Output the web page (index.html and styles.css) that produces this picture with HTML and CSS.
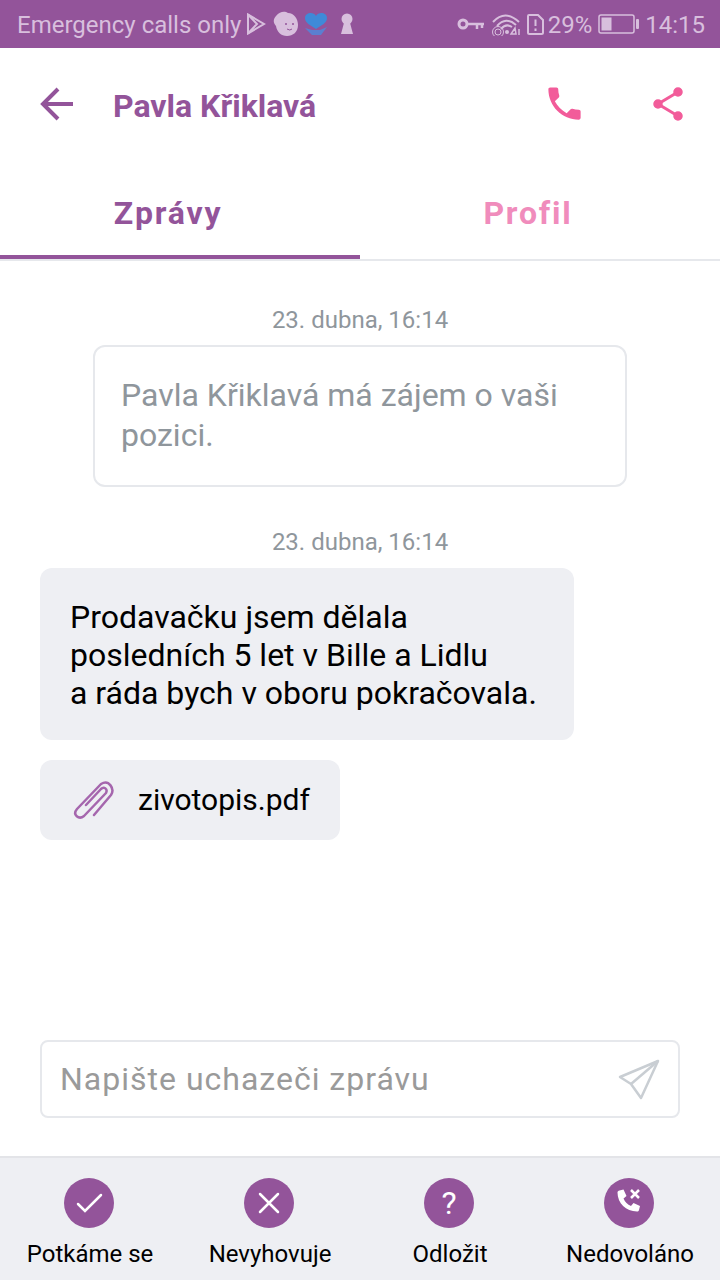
FILE: index.html
```html
<!DOCTYPE html>
<html lang="cs">
<head>
  <meta charset="UTF-8" />
  <meta name="viewport" content="width=device-width, initial-scale=1" />
  <title>Pavla Křiklavá</title>
  <link rel="stylesheet" href="styles.css">
</head>
<body>
  <div class="app">

    <div class="status-bar">
      <div class="status-left">
        <span class="carrier">Emergency calls only</span>
        <svg class="ic-play" width="20" height="22" viewBox="0 0 20 22" fill="none" stroke="#d8bfdd" stroke-width="2"><path d="M2 1.500V20.500L18 11Z"/><path d="M2 1.500L11 11L2 20.500"/></svg>
        <svg class="ic-baby" width="26" height="26" viewBox="0 0 26 26"><path d="M3 5C7 0 12 0 15 2C21 2 25 8 25 14C25 21 20 25 14 25C8 25 4 21 3 15C0 12 0 8 3 5Z" fill="#d8bfdd"/><circle cx="13" cy="13" r="1" fill="#93549a"/><circle cx="20" cy="13" r="1" fill="#93549a"/><path d="M14 18q3 2 5 0" fill="none" stroke="#93549a" stroke-width="1"/></svg>
        <svg class="ic-heart" width="24" height="24" viewBox="0 0 24 24"><path d="M12 17C6 13 1 11 1 6C1 1 9 -1 12 4C15 -1 23 1 23 6C23 11 18 13 12 17Z" fill="#3f8ad8"/><path d="M1 16L8 18H16L23 15L17 23H8Z" fill="#5b7fd0"/></svg>
        <svg class="ic-keyhole" width="14" height="22" viewBox="0 0 14 22"><circle cx="7" cy="6" r="5.500" fill="#d8bfdd"/><path d="M4.500 8H9.500L13 21H1Z" fill="#d8bfdd"/></svg>
      </div>
      <div class="status-right">
        <svg class="ic-key" width="28" height="14" viewBox="0 0 28 14" fill="none" stroke="#d8bfdd"><circle cx="6" cy="7" r="4" stroke-width="3"/><path d="M10 7H27M20 7V12M25 7V11" stroke-width="2.500"/></svg>
        <svg class="ic-wifi" width="29" height="24" viewBox="0 0 29 24" fill="none" stroke="#d8bfdd" stroke-width="2"><path d="M1 10Q13 -3 27 10"/><path d="M5 14Q14 4 24 13"/><path d="M9 17Q14 11 20 15"/><circle cx="6" cy="20" r="3" stroke-width="1"/><circle cx="6" cy="20" r="5.500" stroke-width="1"/><circle cx="15" cy="20" r="2" fill="#d8bfdd" stroke="none"/><path d="M19 22h5l-1-6zM27 17v6" stroke-width="1.500"/></svg>
        <svg class="ic-sim" width="17" height="21" viewBox="0 0 17 21" fill="none" stroke="#d8bfdd" stroke-width="2"><path d="M2 1H11L16 6V18.500Q16 20 14.500 20H2.500Q1 20 1 18.500V2Q1 1 2 1Z"/><path d="M8.500 5.500V12M8.500 14.500V17"/></svg>
        <span class="battery-pct">29%</span>
        <svg class="ic-battery" width="41" height="20" viewBox="0 0 41 20" fill="none"><rect x="1" y="1" width="35" height="18" rx="2" stroke="#d8bfdd" stroke-width="1.500"/><rect x="3.500" y="3.500" width="10" height="13" fill="#d8bfdd"/><rect x="38" y="5" width="3" height="10" rx="1" fill="#d8bfdd"/></svg>
        <span class="clock">14:15</span>
      </div>
    </div>

    <header class="top-bar">
      <svg class="back" width="34" height="34" viewBox="0 0 34 34" fill="none" stroke="#93549a" stroke-width="4"><path d="M33 17H3"/><path d="M18 2L3 17L18 32"/></svg>
      <h1 class="contact-name">Pavla Křiklavá</h1>
      <div class="top-actions">
        <svg class="ic-call" width="43" height="43" viewBox="0 0 24 24" fill="#f25c9a"><path d="M6.620 10.790c1.440 2.830 3.760 5.140 6.590 6.590l2.200-2.200c.27-.27.67-.36 1.020-.24 1.120.37 2.330.57 3.570.57.55 0 1 .45 1 1V20c0 .55-.45 1-1 1-9.390 0-17-7.610-17-17 0-.55.45-1 1-1h3.500c.55 0 1 .45 1 1 0 1.250.2 2.450.57 3.570.11.35.03.74-.25 1.020l-2.200 2.200z"/></svg>
        <svg class="ic-share" width="34" height="36" viewBox="0 0 34 36" fill="#f25c9a" stroke="#f25c9a"><path d="M27 6L7 18L27 30" fill="none" stroke-width="3"/><circle cx="27" cy="6" r="4" stroke-width="1.500"/><circle cx="7" cy="18" r="4" stroke-width="1.500"/><circle cx="27" cy="30" r="4" stroke-width="1.500"/></svg>
      </div>
    </header>

    <nav class="tabs">
      <a class="tab active" href="#zpravy">Zprávy</a>
      <a class="tab" href="#profil">Profil</a>
    </nav>

    <main class="messages">
      <p class="stamp">23. dubna, 16:14</p>
      <div class="notice">Pavla Křiklavá má zájem o vaši pozici.</div>
      <p class="stamp stamp-second">23. dubna, 16:14</p>
      <div class="bubble">Prodavačku jsem dělala<br>posledních 5 let v Bille a Lidlu<br>a ráda bych v oboru pokračovala.</div>
      <div class="file">
        <svg width="42" height="42" viewBox="0 0 42 42" fill="none" stroke="#a566ad" stroke-width="2.500" stroke-linecap="round" stroke-linejoin="round"><path d="M21 37L38 17C42 11 36 1 28 6L4 31C-1 37 6 42 11 38L33 15C35 11 31 8 28 11L13 27"/></svg>
        <span>zivotopis.pdf</span>
      </div>
    </main>

    <div class="composer">
      <span class="placeholder">Napište uchazeči zprávu</span>
      <svg width="42" height="42" viewBox="0 0 42 42" fill="none" stroke="#c9ced3" stroke-width="2.500" stroke-linejoin="round"><path d="M40 3L2 19L13 26L23 40Z"/><path d="M40 3L13 26"/></svg>
    </div>

    <footer class="actions">
      <div class="action">
        <span class="circle"><svg width="28" height="28" viewBox="0 0 28 28" fill="none" stroke="#fff" stroke-width="2.500" stroke-linecap="round"><path d="M3 15L10 22L26 6"/></svg></span>
        <span class="action-label">Potkáme se</span>
      </div>
      <div class="action">
        <span class="circle"><svg width="26" height="26" viewBox="0 0 26 26" fill="none" stroke="#fff" stroke-width="2.500" stroke-linecap="round"><path d="M4 4L22 22M22 4L4 22"/></svg></span>
        <span class="action-label">Nevyhovuje</span>
      </div>
      <div class="action">
        <span class="circle circle-text">?</span>
        <span class="action-label">Odložit</span>
      </div>
      <div class="action">
        <span class="circle"><svg width="30" height="30" viewBox="0 0 30 30"><path d="M5.500 2.500l4-1 3 6.500-3 2.500c1.500 3.500 4 6 7.500 7.500l2.500-3 6.500 3-1 4c-.3 1-1 1.500-2 1.500C12 23.500 3.500 15 3.500 4.500c0-1 .8-1.700 2-2z" fill="#fff"/><path d="M17 2L25 10M25 2L17 10" fill="none" stroke="#fff" stroke-width="2.500"/></svg></span>
        <span class="action-label">Nedovoláno</span>
      </div>
    </footer>

  </div>
</body>
</html>
```

FILE: styles.css
```css
:root {
  --purple: #93549a;
  --pink: #f25c9a;
  --line: #e6e8ec;
  --panel: #eeeff3;
  --status-text: #d8bfdd;
}

* {
  box-sizing: border-box;
}

body {
  margin: 0;
  font-family: Roboto, 'Liberation Sans', sans-serif;
  background: #fff;
  color: #000;
}

.app {
  width: 720px;
  height: 1280px;
  display: flex;
  flex-direction: column;
  overflow: hidden;
}

/* status bar */
.status-bar {
  height: 48px;
  flex: none;
  padding: 0 15px 0 17px;
  display: flex;
  justify-content: space-between;
  align-items: center;
  background: var(--purple);
  color: var(--status-text);
  font-size: 24px;
}

.status-left,
.status-right {
  display: flex;
  align-items: center;
}

.status-bar span {
  margin-top: 2px;
}

.ic-play {
  margin-left: 5px;
}

.ic-baby {
  margin-left: 7px;
}

.ic-heart {
  margin-left: 5px;
}

.ic-keyhole {
  margin-left: 12px;
}

.ic-wifi {
  margin-left: 7px;
}

.ic-sim {
  margin-left: 6px;
}

.battery-pct {
  margin-left: 4px;
}

.ic-battery {
  margin-left: 6px;
}

.clock {
  margin-left: 6px;
}

/* header */
.top-bar {
  height: 112px;
  flex: none;
  padding: 0 35px 0 40px;
  display: flex;
  align-items: center;
}

.contact-name {
  margin: 4px 0 0 39px;
  font-size: 32px;
  font-weight: 700;
  color: var(--purple);
}

.top-actions {
  margin-left: auto;
  display: flex;
  align-items: center;
  gap: 65px;
}

.ic-call {
  margin-top: -1px;
}

/* tabs */
.tabs {
  height: 101px;
  flex: none;
  display: flex;
  border-bottom: 2px solid var(--line);
}

.tab {
  width: 360px;
  padding: 34px 24px 0 0;
  text-align: center;
  text-decoration: none;
  font-size: 32px;
  font-weight: 700;
  letter-spacing: 1.800px;
  color: #f08cbc;
}

.tab.active {
  color: var(--purple);
  border-bottom: 4px solid var(--purple);
}

/* messages */
.messages {
  flex: 1;
  padding: 0 40px;
  display: flex;
  flex-direction: column;
  align-items: flex-start;
}

.stamp {
  width: 100%;
  margin: 45px 0 11px;
  text-align: center;
  font-size: 24px;
  line-height: 28px;
  color: #8f969c;
}

.stamp-second {
  margin-top: 41px;
  margin-bottom: 12px;
}

.notice {
  width: 534px;
  margin-left: 53px;
  padding: 28px 26px 30px;
  border: 2px solid var(--line);
  border-radius: 12px;
  font-size: 32px;
  line-height: 40px;
  color: #8f969c;
}

.bubble {
  width: 534px;
  padding: 30px 20px 28px 30px;
  border-radius: 12px;
  background: var(--panel);
  font-size: 32px;
  line-height: 38px;
}

.file {
  width: 300px;
  height: 80px;
  margin-top: 20px;
  padding: 0 0 2px 33px;
  display: flex;
  align-items: center;
  gap: 23px;
  border-radius: 12px;
  background: var(--panel);
  font-size: 30px;
}

/* message input */
.composer {
  height: 78px;
  flex: none;
  margin: 0 40px 38px;
  padding: 0 18px 0 18px;
  display: flex;
  justify-content: space-between;
  align-items: center;
  border: 2px solid var(--line);
  border-radius: 8px;
}

.placeholder {
  font-size: 32px;
  letter-spacing: 1px;
  color: #9a9a9a;
}

/* bottom actions */
.actions {
  height: 124px;
  flex: none;
  padding-top: 20px;
  display: grid;
  grid-template-columns: repeat(4, 180px);
  border-top: 2px solid #e3e4e8;
  background: var(--panel);
}

.action {
  display: flex;
  flex-direction: column;
  align-items: center;
  gap: 12px;
}

.circle {
  width: 50px;
  height: 50px;
  margin-right: 2px;
  display: flex;
  justify-content: center;
  align-items: center;
  border-radius: 50%;
  background: var(--purple);
}

.circle-text {
  font-size: 32px;
  color: #fff;
}

.action-label {
  font-size: 24px;
  line-height: 28px;
}
```
